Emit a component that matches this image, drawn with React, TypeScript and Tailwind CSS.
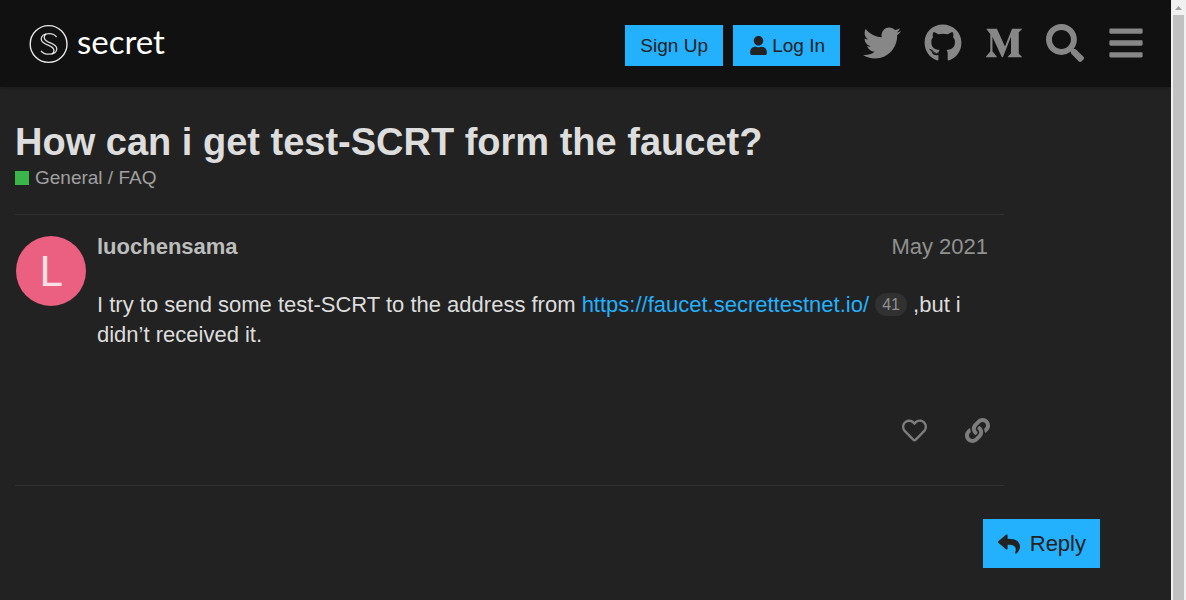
import { FaBars, FaGithub, FaLink, FaMediumM, FaRegHeart, FaReply, FaSearch, FaTwitter, FaUser } from "react-icons/fa";

function Logo() {
  return (
    <a href="/" aria-label="secret" className="flex items-center gap-2 text-white">
      <svg viewBox="0 0 40 40" className="size-10" fill="none" stroke="currentColor">
        <circle cx="19.6" cy="20" r="18.4" strokeWidth="1.4" strokeOpacity="0.9" />
        <path strokeWidth="1.3" strokeOpacity="0.85" d="M27.6 13.2C26 10.6 23.4 9.6 20 9.6C15.4 9.6 12.2 11.6 12.2 15C12.2 18.4 15.4 19.6 18.6 20.9C22.4 22.4 25 23.6 25 26.4C25 28 24.2 29.2 22.8 29.9" />
        <path strokeWidth="1.3" strokeOpacity="0.85" d="M12 26.8C13.6 29.2 16.4 30.2 19.8 30.2C24.6 30.2 27.8 28.2 27.8 24.8C27.8 21.4 24.8 20.2 21.4 18.9C17.6 17.4 15.2 16.2 15.2 13.4C15.2 11.8 15.8 10.8 17.2 9.9" />
      </svg>
      <span className="pb-1.5 font-['Lato',sans-serif] text-[33px] leading-10">secret</span>
    </a>
  );
}

const links = [
  { label: "Twitter", Icon: FaTwitter },
  { label: "GitHub", Icon: FaGithub },
  { label: "Medium", Icon: FaMediumM },
];

function Header() {
  return (
    <header className="flex h-[87px] items-center justify-between bg-[#111111] pr-[15px] pl-[29px] shadow-[0_2px_4px_-1px_rgba(0,0,0,0.25)]">
      <Logo />
      <div className="flex items-center">
        <div className="mt-1 mr-[11px] flex gap-2.5 text-[19px] leading-[23px] text-[#222222]">
          <button type="button" className="h-[41px] min-w-[98px] bg-[#23b0fc] px-[15px]">Sign Up</button>
          <button type="button" className="flex h-[41px] items-center gap-[5px] bg-[#23b0fc] pr-[15px] pl-[17px]">
            <FaUser className="h-[19px] w-[17px]" />
            Log In
          </button>
        </div>
        <nav className="mb-0.5 flex text-[#878787]">
          {links.map(({ label, Icon }) => (
            <a key={label} href={`#${label}`} aria-label={label} className="flex w-[61px] justify-center">
              <Icon className="size-[38px]" />
            </a>
          ))}
          <button type="button" aria-label="Search" className="flex w-[61px] justify-center">
            <FaSearch className="size-[38px]" />
          </button>
          <button type="button" aria-label="Menu" className="flex w-[61px] justify-center">
            <FaBars className="size-[38px]" />
          </button>
        </nav>
      </div>
    </header>
  );
}

function Post() {
  return (
    <article className="flex gap-3 border-y border-[#313131] pt-[17px] pb-[41px]">
      <div className="mt-1 ml-px flex size-[70px] shrink-0 items-center justify-center rounded-full bg-[#eb5f80] font-['Roboto',sans-serif] text-[43px] leading-none text-[#fbdfe6]">
        L
      </div>
      <div className="-ml-px flex-1 text-[22px] leading-[30px]">
        <div className="flex justify-between pr-4">
          <a href="#luochensama" className="font-bold text-[#bdbdbd]">luochensama</a>
          <a href="#date" className="text-[#919191]">May 2021</a>
        </div>
        <p className="mt-7 pr-4 text-[#dddddd]">
          I try to send some test-SCRT to the address from{" "}
          <a href="#faucet" className="text-[#23b0fc]">https://faucet.secrettestnet.io/</a>{" "}
          <span className="inline-block rounded-full bg-[#313131] px-[7px] align-[2px] text-[16px] leading-[23px] text-[#919191]">41</span>{" "}
          ,but i didn’t received it.
        </p>
        <div className="mt-[67px] flex justify-end gap-9 pr-[13px] text-[#7d7d7d]">
          <button type="button" aria-label="Like" className="p-px"><FaRegHeart className="size-[25px]" /></button>
          <button type="button" aria-label="Share link" className="p-px"><FaLink className="size-[25px]" /></button>
        </div>
      </div>
    </article>
  );
}

function Scrollbar() {
  return (
    <div aria-hidden="true" className="flex w-[15px] shrink-0 flex-col items-center bg-[#f1f1f1]">
      <svg viewBox="0 0 15 15" className="size-[15px]">
        <path d="M4 10L7.5 6L11 10Z" fill="#a3a3a3" />
      </svg>
      <div className="w-[11px] flex-1 bg-[#c1c1c1]" />
    </div>
  );
}

export default function App() {
  return (
    <div className="flex min-h-screen bg-[#222222] font-['Liberation_Sans',Arial,sans-serif]">
      <div className="min-w-0 flex-1">
        <Header />
        <main className="max-w-[1100px] pt-8 pl-[15px]">
          <h1 className="text-[38px] leading-[47px] font-bold text-[#dddddd]">How can i get test-SCRT form the faucet?</h1>
          <a href="#faq" className="flex items-center gap-1.5 text-[19px] leading-6 text-[#a0a0a0]">
            <span className="size-3.5 bg-[#3ab54a]" />
            General / FAQ
          </a>
          <div className="mt-6 mr-24">
            <Post />
          </div>
          <div className="mt-[33px] flex justify-end">
            <button type="button" className="flex h-[49px] items-center gap-2.5 bg-[#23b0fc] pr-3.5 pl-[15px] text-[22px] text-[#222222]">
              <FaReply className="size-[22px]" />
              Reply
            </button>
          </div>
        </main>
      </div>
      <Scrollbar />
    </div>
  );
}
